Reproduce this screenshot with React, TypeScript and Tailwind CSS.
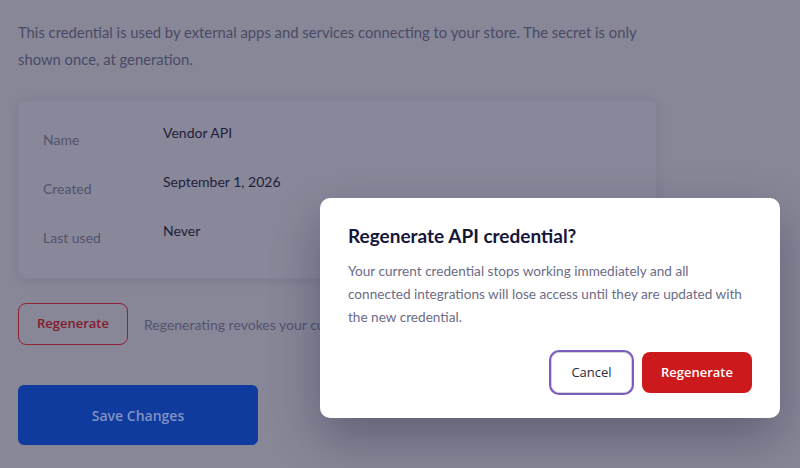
import React from "react";

export default function App() {
  const rows = [
    { label: "Name", value: "Vendor API" },
    { label: "Created", value: "September 1, 2026" },
    { label: "Last used", value: "Never" },
  ];
  return (
    <div className="relative w-[800px] h-[468px] overflow-hidden bg-[#878798] font-['Lato',sans-serif]">
      <div className="px-[18px] pt-[19px]">
        <p className="w-[640px] text-[14.8px] leading-[27px] text-[#4a4a65]">
          This credential is used by external apps and services connecting to your store. The secret is only shown once, at generation.
        </p>
        <div className="mt-[27px] w-[639px] rounded-lg bg-[#88889a] shadow-[0_2px_10px_rgba(40,40,70,0.12)] border border-[#83839a] px-[24px] pt-[21px] pb-[36px] flex flex-col gap-[27px]">
          {rows.map((r) => (
            <div key={r.label} className="flex items-start h-[22px]">
              <div className="w-[120px] pt-[7px] text-[14px] text-[#52526d]">{r.label}</div>
              <div className="text-[14px] text-[#1e1e38]">{r.value}</div>
            </div>
          ))}
        </div>
        <div className="mt-[24px] flex items-center gap-[16px]">
          <button className="h-[42px] w-[110px] rounded-lg border border-[#8e2236] text-[#86192c] font-['Open_Sans',sans-serif] font-semibold text-[13px]">
            Regenerate
          </button>
          <span className="text-[14px] text-[#535370] whitespace-nowrap">
            Regenerating revokes your current credential immediately.
          </span>
        </div>
        <button className="mt-[40px] h-[60px] w-[240px] rounded-md bg-[#0f3a9e] text-[#8292c2] font-['Open_Sans',sans-serif] font-semibold text-[14px]">
          Save Changes
        </button>
      </div>

      <div className="absolute left-[320px] top-[198px] w-[460px] rounded-[10px] bg-white px-[28px] pt-[26px] pb-[25px] shadow-[0_20px_50px_rgba(10,10,40,0.3)]">
        <h2 className="text-[19px] font-bold text-[#16163a] leading-[24px]">Regenerate API credential?</h2>
        <p className="mt-[12px] text-[13.6px] leading-[23px] text-[#6c6c86]">
          Your current credential stops working immediately and all connected integrations will lose access until they are updated with the new credential.
        </p>
        <div className="mt-[23px] flex justify-end items-center gap-[10px]">
          <button className="h-[41px] w-[81px] rounded-lg border border-[#d4d4dd] bg-white text-[#2a2a3a] font-['Open_Sans',sans-serif] text-[13px] shadow-[0_0_0_2px_#7b5cbc]">
            Cancel
          </button>
          <button className="h-[41px] w-[110px] rounded-lg bg-[#cc1a1c] text-white font-['Open_Sans',sans-serif] font-semibold text-[13px]">
            Regenerate
          </button>
        </div>
      </div>
    </div>
  );
}
